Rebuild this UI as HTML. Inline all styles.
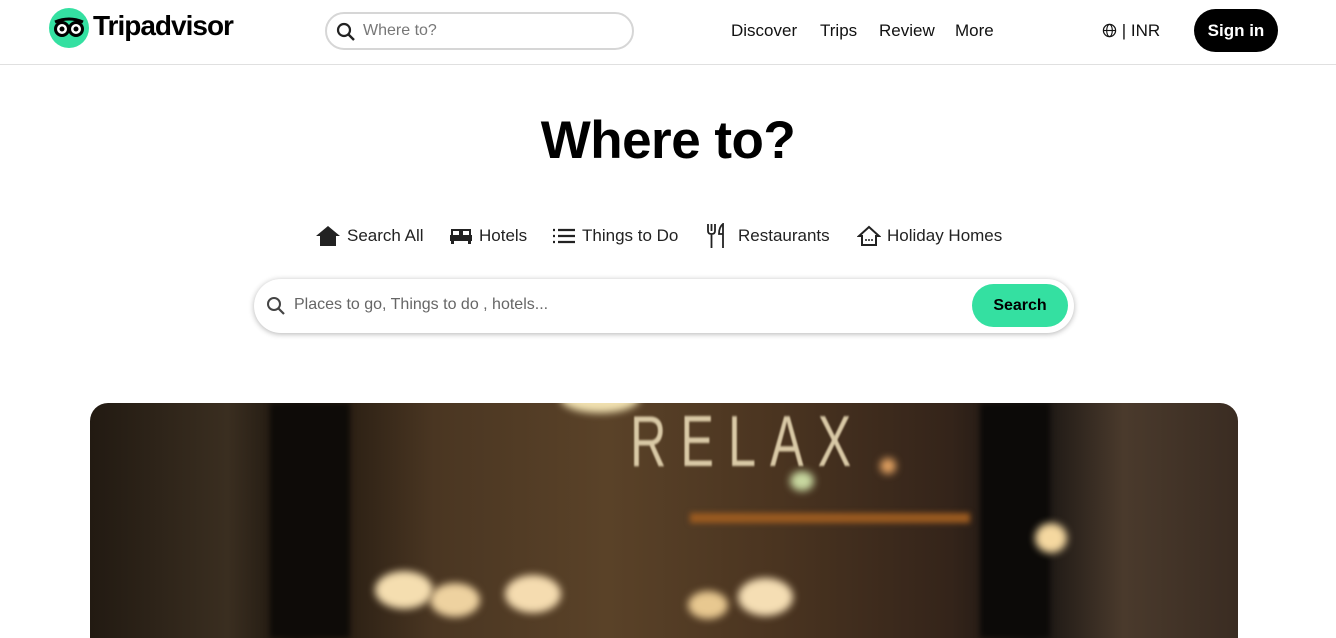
<!DOCTYPE html>
<html><head><meta charset="utf-8"><style>
*{margin:0;padding:0;box-sizing:border-box}
html,body{width:1336px;height:638px;overflow:hidden}
body{background:#fff;font-family:"Liberation Sans",sans-serif;color:#000;position:relative}
.hdr{position:absolute;top:0;left:0;width:1336px;height:65px;border-bottom:1px solid #e0e0e0}
.logo{position:absolute;left:49px;top:8px;width:40px;height:40px;border-radius:50%;background:#34e0a1}
.brand{position:absolute;left:93px;top:10px;font-size:28px;font-weight:bold;letter-spacing:-1px}
.tsearch{position:absolute;left:325px;top:12px;width:309px;height:38px;border:2px solid #d6d6d6;border-radius:20px}
.tsearch span{position:absolute;left:36px;top:8px;font-size:16px;color:#777}
.nav{position:absolute;top:21px;font-size:17px;color:#111}
.sign{position:absolute;left:1194px;top:9px;width:84px;height:43px;border-radius:22px;background:#000;color:#fff;font-weight:bold;font-size:17px;text-align:center;line-height:43px}
h1{position:absolute;left:0;width:1336px;top:110px;text-align:center;font-size:53px;font-weight:bold;letter-spacing:-0.5px}
.tab{position:absolute;top:222px;height:28px;font-size:17px;color:#222;display:flex;align-items:center;gap:6px}
.big{position:absolute;left:254px;top:279px;width:820px;height:54px;border-radius:27px;box-shadow:0 1px 6px rgba(0,0,0,.3);background:#fff}
.big .ph{position:absolute;left:40px;top:17px;font-size:16px;color:#666}
.big .btn{position:absolute;right:6px;top:5px;width:96px;height:43px;border-radius:22px;background:#34e0a1;font-weight:bold;font-size:16px;text-align:center;line-height:43px}
.hero{position:absolute;left:90px;top:403px;width:1148px;height:235px;border-radius:18px 18px 0 0;overflow:hidden;
background:linear-gradient(90deg,#221a12 0%,#3a2e20 12%,#1a130c 18%,#4a3622 30%,#5a4228 45%,#4a3420 60%,#34241a 75%,#151210 82%,#4a3a2c 90%,#3a2c22 100%)}
.b{position:absolute;border-radius:50%;filter:blur(4px)}
</style></head><body>
<div class="hdr">
<div class="logo"><svg width="40" height="40" viewBox="0 0 40 40"><circle cx="13" cy="21" r="6.5" fill="#fff" stroke="#000" stroke-width="3"/><circle cx="27" cy="21" r="6.5" fill="#fff" stroke="#000" stroke-width="3"/><circle cx="13" cy="21" r="2.5"/><circle cx="27" cy="21" r="2.5"/><path d="M6 14 Q20 8 34 14" stroke="#000" stroke-width="3" fill="none"/></svg></div>
<div class="brand">Tripadvisor</div>
<div class="tsearch"><svg style="position:absolute;left:9px;top:8px" width="20" height="20" viewBox="0 0 20 20"><circle cx="8" cy="8" r="6" fill="none" stroke="#222" stroke-width="2.2"/><path d="M12.5 12.5 L18 18" stroke="#222" stroke-width="2.4"/></svg><span>Where to?</span></div>
<div class="nav" style="left:731px">Discover</div>
<div class="nav" style="left:820px">Trips</div>
<div class="nav" style="left:879px">Review</div>
<div class="nav" style="left:955px">More</div>
<div class="nav" style="left:1102px"><svg width="15" height="15" viewBox="0 0 16 16" style="vertical-align:-2px"><circle cx="8" cy="8" r="6.5" fill="none" stroke="#111" stroke-width="1.3"/><ellipse cx="8" cy="8" rx="3" ry="6.5" fill="none" stroke="#111" stroke-width="1.2"/><path d="M1.5 8h13" stroke="#111" stroke-width="1.2"/></svg> | INR</div>
<div class="sign">Sign in</div>
</div>
<h1>Where to?</h1>
<div class="tab" style="left:315px"><svg width="26" height="22" viewBox="0 0 26 22"><path d="M13 1 L25 11 H21 V21 H5 V11 H1 Z" fill="#222"/></svg>Search All</div>
<div class="tab" style="left:449px"><svg width="24" height="20" viewBox="0 0 24 20"><path d="M2 3h20v6H2zM1 9h22v6H1zM2 15h3v3H2zM19 15h3v3h-3z" fill="#222"/><rect x="4" y="5" width="6" height="4" fill="#fff"/><rect x="14" y="5" width="6" height="4" fill="#fff"/></svg>Hotels</div>
<div class="tab" style="left:552px"><svg width="24" height="18" viewBox="0 0 24 18"><path d="M1 3h2M1 9h2M1 15h2M6 3h17M6 9h17M6 15h17" stroke="#222" stroke-width="2.2"/></svg>Things to Do</div>
<div class="tab" style="left:706px;gap:12px"><svg width="20" height="26" viewBox="0 0 20 26"><path d="M2 1v7q0 3 3.5 3V25M5.5 1v7M9 1v7q0 3-3.5 3" fill="none" stroke="#222" stroke-width="1.8"/><path d="M17 25V1q-4 3-4 10h4" fill="none" stroke="#222" stroke-width="1.8"/></svg>Restaurants</div>
<div class="tab" style="left:857px"><svg width="24" height="22" viewBox="0 0 24 22"><path d="M12 2L22 11H19V20H5V11H2Z" fill="none" stroke="#222" stroke-width="2"/><circle cx="9" cy="15" r="1" fill="#222"/><circle cx="12" cy="15" r="1" fill="#222"/><circle cx="15" cy="15" r="1" fill="#222"/></svg>Holiday Homes</div>
<div class="big"><svg style="position:absolute;left:12px;top:17px" width="20" height="20" viewBox="0 0 20 20"><circle cx="8" cy="8" r="6" fill="none" stroke="#444" stroke-width="2"/><path d="M12.5 12.5 L18 18" stroke="#444" stroke-width="2.2"/></svg><div class="ph">Places to go, Things to do , hotels...</div><div class="btn">Search</div></div>
<div class="hero">
<div style="position:absolute;left:540px;top:-2px;font-size:72px;color:#d9c9a6;letter-spacing:20px;font-family:'Liberation Sans';transform:scaleX(.7);transform-origin:left;filter:blur(1px)">RELAX</div>
<div class="b" style="left:470px;top:-20px;width:80px;height:30px;background:#f0e0b0"></div>
<div style="position:absolute;left:180px;top:0;width:80px;height:235px;background:#0e0b08;filter:blur(3px)"></div>
<div style="position:absolute;left:890px;top:0;width:70px;height:235px;background:#0c0a08;filter:blur(3px)"></div>
<div style="position:absolute;left:600px;top:110px;width:280px;height:10px;background:#9a5a20;filter:blur(3px)"></div>
<div class="b" style="left:285px;top:168px;width:58px;height:38px;background:#f5deb0"></div>
<div class="b" style="left:340px;top:180px;width:50px;height:34px;background:#eed2a0"></div>
<div class="b" style="left:415px;top:172px;width:56px;height:38px;background:#f5dcb0"></div>
<div class="b" style="left:648px;top:175px;width:55px;height:38px;background:#f5deb4"></div>
<div class="b" style="left:598px;top:188px;width:40px;height:28px;background:#e8c890"></div>
<div class="b" style="left:945px;top:120px;width:32px;height:30px;background:#f5d8a0"></div>
<div class="b" style="left:700px;top:68px;width:24px;height:20px;background:#c8d8a0"></div>
<div class="b" style="left:790px;top:55px;width:16px;height:16px;background:#e0a060"></div>
</div>
</body></html>
